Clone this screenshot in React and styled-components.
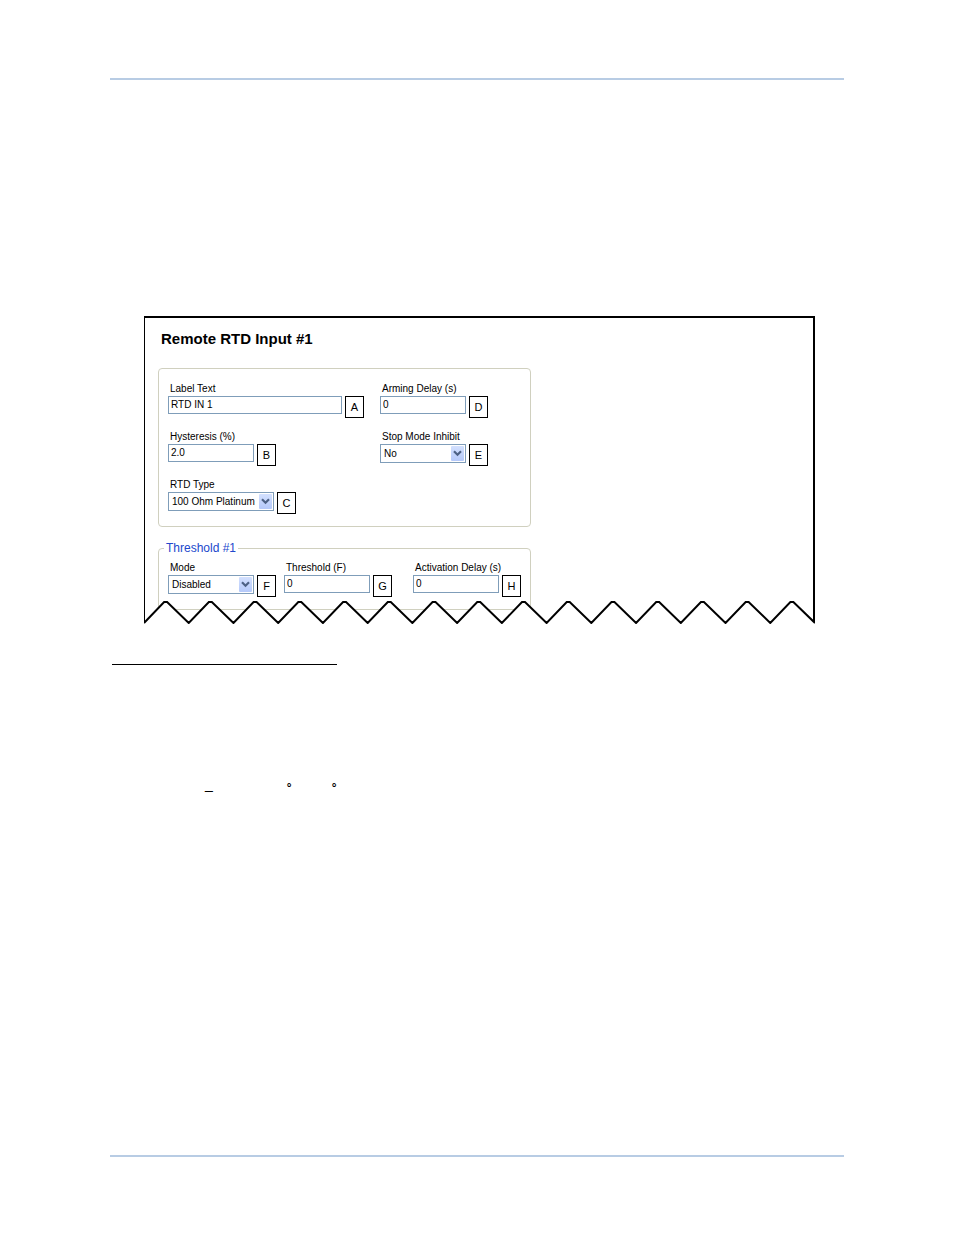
import React from "react";
import styled, { createGlobalStyle } from "styled-components";

const TEETH = 15;
const TOOTH_WIDTH = 60;

const tornPoints = () => {
  const points = ["0,23"];
  for (let i = 0; i < TEETH; i++) {
    const x = i * TOOTH_WIDTH;
    points.push(`${x + 27},2`, `${x + 31},2`, `${x + TOOTH_WIDTH},23`);
  }
  return points.join(" ");
};

const TextField = ({ id, label, value, mark, wide }) => (
  <StField>
    <StLabel htmlFor={id}>{label}</StLabel>
    <StControlRow>
      <StInput id={id} type="text" defaultValue={value} $wide={wide} />
      <StMark>{mark}</StMark>
    </StControlRow>
  </StField>
);

const SelectField = ({ id, label, value, mark, wide }) => (
  <StField>
    <StLabel htmlFor={id}>{label}</StLabel>
    <StControlRow>
      <StSelectBox $wide={wide}>
        <StSelect id={id} defaultValue={value}>
          <option value={value}>{value}</option>
        </StSelect>
        <StArrow>
          <svg width="9" height="7" viewBox="0 0 9 7" aria-hidden="true">
            <path d="M1 1.3 4.5 4.8 8 1.3" fill="none" stroke="#4d6185" strokeWidth="2.2" />
          </svg>
        </StArrow>
      </StSelectBox>
      <StMark>{mark}</StMark>
    </StControlRow>
  </StField>
);

const App = () => {
  return (
    <StPage>
      <GlobalStyle />
      <StRule />
      <StFigure>
        <StTitle>Remote RTD Input #1</StTitle>
        <StPanel>
          <StInputGrid>
            <TextField id="labelText" label="Label Text" value="RTD IN 1" mark="A" wide="174px" />
            <TextField id="armingDelay" label="Arming Delay (s)" value="0" mark="D" />
            <TextField id="hysteresis" label="Hysteresis (%)" value="2.0" mark="B" />
            <SelectField id="stopMode" label="Stop Mode Inhibit" value="No" mark="E" />
            <SelectField
              id="rtdType"
              label="RTD Type"
              value="100 Ohm Platinum"
              mark="C"
              wide="106px"
            />
          </StInputGrid>
        </StPanel>
        <StFieldset>
          <StLegend>Threshold #1</StLegend>
          <StThresholdGrid>
            <SelectField id="mode" label="Mode" value="Disabled" mark="F" />
            <TextField id="threshold" label="Threshold (F)" value="0" mark="G" />
            <TextField id="activationDelay" label="Activation Delay (s)" value="0" mark="H" />
          </StThresholdGrid>
        </StFieldset>
        <StTornEdge
          viewBox={`0 0 ${TEETH * TOOTH_WIDTH} 24`}
          preserveAspectRatio="none"
          aria-hidden="true"
        >
          <polygon points={`${tornPoints()} ${TEETH * TOOTH_WIDTH},24 0,24`} fill="#fff" />
          <polyline
            points={tornPoints()}
            fill="none"
            stroke="#000"
            strokeWidth="2"
            vectorEffect="non-scaling-stroke"
          />
        </StTornEdge>
      </StFigure>
      <StCaptionLine />
      <StNotes>
        <StUnderscore>_</StUnderscore>
        <StDegree>°</StDegree>
        <StDegree>°</StDegree>
      </StNotes>
      <StRule $last />
    </StPage>
  );
};

const GlobalStyle = createGlobalStyle`
  * {
    box-sizing: border-box;
  }
  body {
    margin: 0;
    background: #fff;
    color: #000;
    font-family: "Liberation Sans", Arial, sans-serif;
  }
`;

const StPage = styled.main`
  display: flex;
  flex-direction: column;
  min-height: 100vh;
  padding: 78px 110px;
`;

const StRule = styled.hr`
  width: 100%;
  height: 2px;
  margin: ${({ $last }) => ($last ? "auto 0 0" : "0")};
  border: 0;
  background: #b8cce4;
`;

const StFigure = styled.section`
  position: relative;
  margin: 236px 29px 0 34px;
  padding: 12px 13px 14px;
  border: solid #000;
  border-width: 2px 2px 0 1px;
`;

const StTitle = styled.h1`
  margin: 0 0 20px 3px;
  font-size: 15px;
  line-height: 18px;
  font-weight: 700;
`;

const StPanel = styled.div`
  max-width: 373px;
  padding: 14px 9px 12px;
  border: 1px solid #d0d0bf;
  border-radius: 4px;
`;

const StFieldset = styled.fieldset`
  max-width: 373px;
  min-width: 0;
  margin: 14px 0 0;
  padding: 7px 9px 12px;
  border: 1px solid #d0d0bf;
  border-radius: 4px;
`;

const StLegend = styled.legend`
  margin-left: -4px;
  padding: 0 2px;
  color: #2248cc;
  font-size: 12px;
  line-height: 14px;
`;

const StInputGrid = styled.div`
  display: grid;
  grid-template-columns: 212px auto;
  row-gap: 13px;
`;

const StThresholdGrid = styled.div`
  display: grid;
  grid-template-columns: 116px 129px auto;
`;

const StField = styled.div`
  display: flex;
  flex-direction: column;
  gap: 1px;
`;

const StLabel = styled.label`
  padding-left: 2px;
  font-size: 10px;
  line-height: 12px;
  white-space: nowrap;
`;

const StControlRow = styled.div`
  display: flex;
  align-items: flex-start;
  gap: 3px;
`;

const StInput = styled.input`
  width: ${({ $wide }) => $wide || "86px"};
  height: 18px;
  padding: 0 2px 2px;
  border: 1px solid #7f9db9;
  border-radius: 0;
  background: #fff;
  color: #000;
  font-family: inherit;
  font-size: 10px;
`;

const StSelectBox = styled.div`
  position: relative;
  width: ${({ $wide }) => $wide || "86px"};
`;

const StSelect = styled.select`
  display: block;
  width: 100%;
  height: 19px;
  padding: 0 16px 0 3px;
  appearance: none;
  border: 1px solid #7f9db9;
  border-radius: 0;
  background: #fff;
  color: #000;
  font-family: inherit;
  font-size: 10px;
`;

const StArrow = styled.span`
  position: absolute;
  top: 2px;
  right: 2px;
  bottom: 2px;
  display: flex;
  align-items: center;
  justify-content: center;
  width: 13px;
  border-radius: 1px;
  background: linear-gradient(#d3e0fe, #b5c9fa);
  pointer-events: none;
`;

const StMark = styled.span`
  display: flex;
  align-items: center;
  justify-content: center;
  width: 19px;
  height: 22px;
  border: 1px solid #000;
  font-size: 11px;
`;

const StTornEdge = styled.svg`
  position: absolute;
  bottom: 0;
  left: -1px;
  width: calc(100% + 3px);
  height: 24px;
`;

const StCaptionLine = styled.hr`
  width: 225px;
  height: 1px;
  margin: 40px 0 0 2px;
  border: 0;
  background: #000;
`;

const StNotes = styled.p`
  display: flex;
  align-items: flex-end;
  margin: 111px 0 0 95px;
  font-size: 14px;
  line-height: 16px;
`;

const StUnderscore = styled.span`
  margin-right: 74px;
`;

const StDegree = styled.span`
  width: 5px;
  margin-right: 40px;
  font-size: 12px;
  font-weight: 700;
  line-height: 8px;
`;

export default App;
